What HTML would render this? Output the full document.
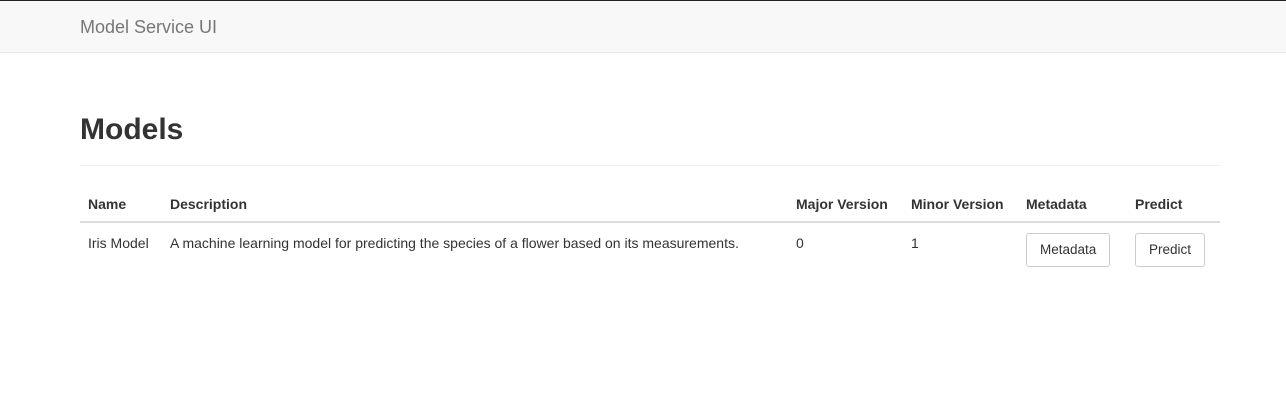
<!DOCTYPE html>
<html><head><style>
*{box-sizing:border-box}
body{margin:0;font-family:"Liberation Sans",sans-serif;font-size:14px;color:#333;background:#fff;width:1286px;height:419px;overflow:hidden}
.top{height:1px;background:#222}
.nav{height:52px;background:#f8f8f8;border-bottom:1px solid #e7e7e7;position:relative}
.brand{position:absolute;left:80px;top:16px;font-size:18px;color:#777;line-height:20px}
h1{position:absolute;left:80px;top:112px;margin:0;font-size:30px;font-weight:bold;line-height:36px;color:#333}
.hr{position:absolute;left:80px;top:165px;width:1140px;height:1px;background:#eee}
table{position:absolute;left:80px;top:186px;width:1140px;border-collapse:collapse;table-layout:fixed}
th{text-align:left;font-weight:bold;padding:0 8px;height:36px;border-bottom:2px solid #ddd;vertical-align:middle}
td{padding:0 8px;vertical-align:top;padding-top:12px;height:56px}
.btn{display:inline-block;border:1px solid #ccc;border-radius:3px;background:#fff;padding:0 13px;height:34px;line-height:32px;font-size:13.5px;margin-top:-2px}
</style></head><body>
<div class="top"></div>
<div class="nav"><div class="brand">Model Service UI</div></div>
<h1>Models</h1>
<div class="hr"></div>
<table>
<colgroup><col style="width:82px"><col style="width:626px"><col style="width:115px"><col style="width:115px"><col style="width:109px"><col style="width:93px"></colgroup>
<tr><th>Name</th><th>Description</th><th>Major Version</th><th>Minor Version</th><th>Metadata</th><th>Predict</th></tr>
<tr><td>Iris Model</td><td>A machine learning model for predicting the species of a flower based on its measurements.</td><td>0</td><td>1</td><td><span class="btn">Metadata</span></td><td><span class="btn">Predict</span></td></tr>
</table>
</body></html>
